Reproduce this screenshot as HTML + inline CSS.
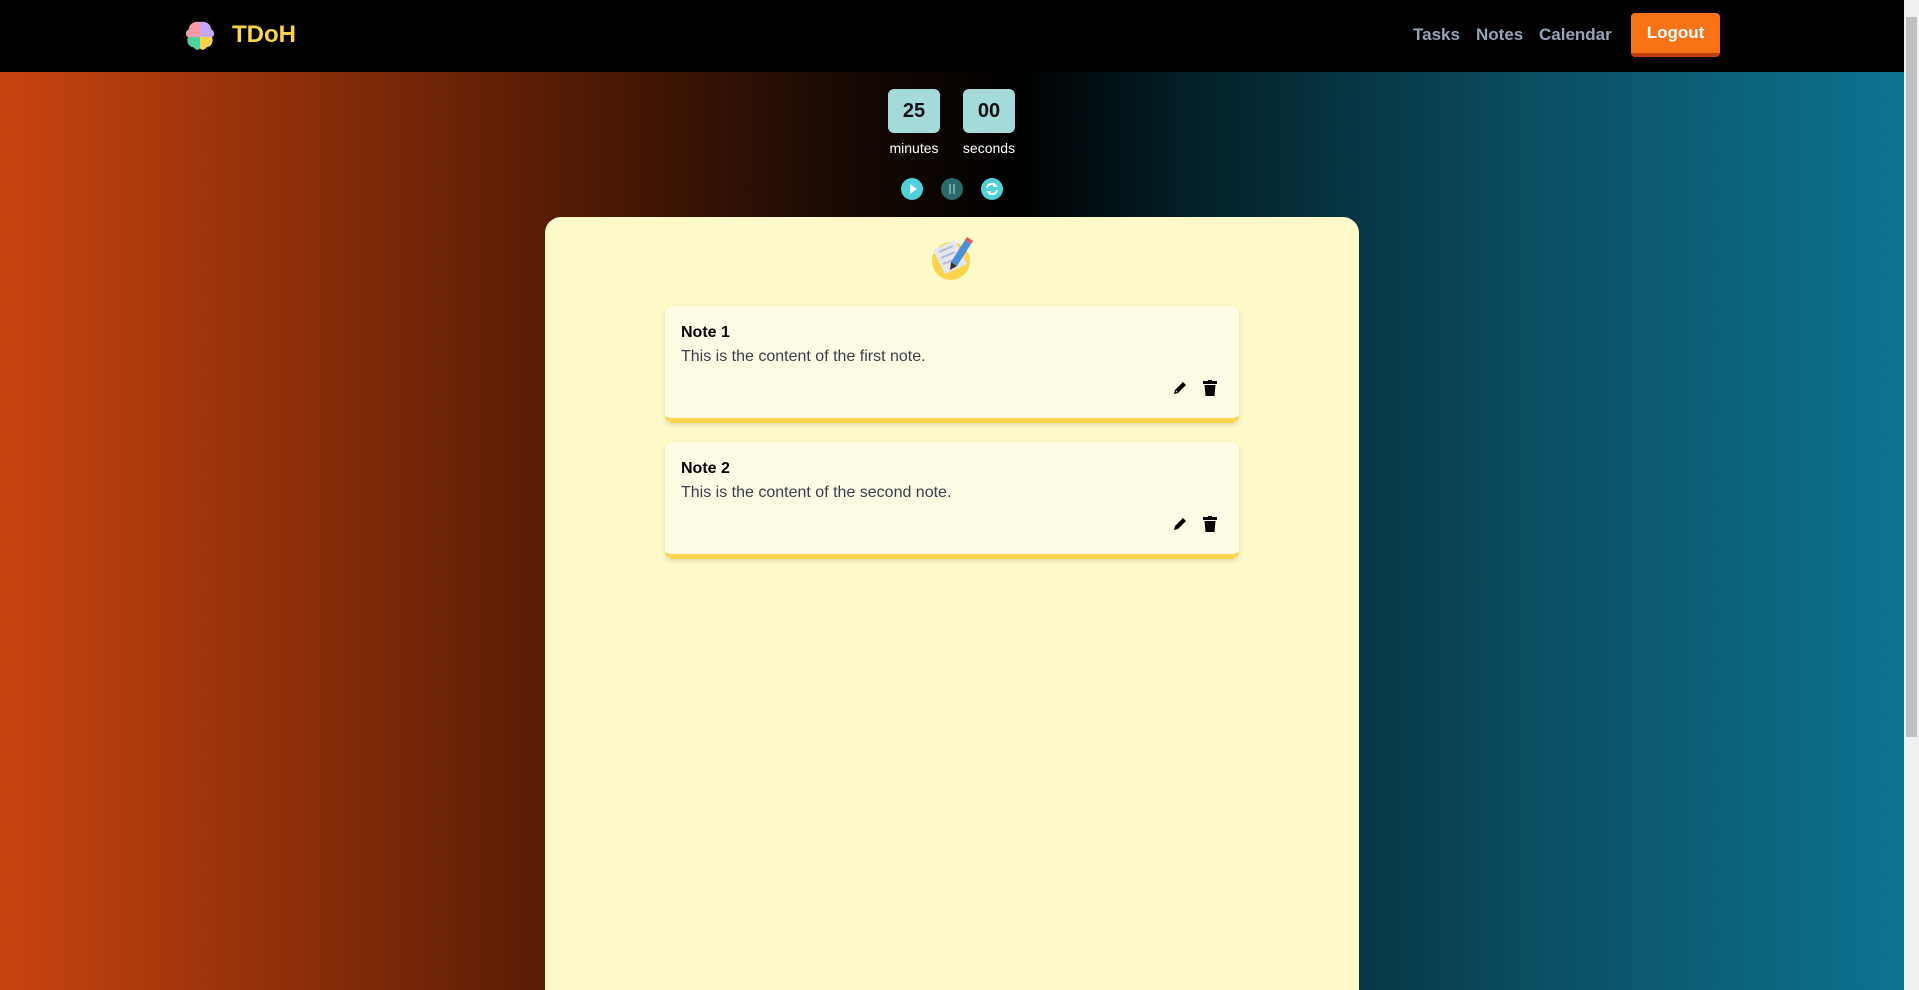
<!DOCTYPE html>
<html><head><meta charset="utf-8"><style>
*{box-sizing:border-box;margin:0;padding:0}
html,body{width:1919px;height:990px;overflow:hidden}
body{font-family:"Liberation Sans",sans-serif;background:linear-gradient(to right,#c9440f 0%,#5a1d05 28%,#140803 45%,#000 53%,#032028 62%,#0b4e62 80%,#0c7592 100%);position:relative}
nav{position:absolute;left:0;top:0;width:1904px;height:72px;background:#000}
.brand{position:absolute;left:232px;top:21px;font-size:24px;font-weight:bold;color:#fcd34d}
.links a{position:absolute;top:25px;font-size:17px;font-weight:bold;color:#94a3b8;text-decoration:none}
.logout{position:absolute;left:1631px;top:13px;width:89px;height:44px;background:#f97316;border-bottom:4px solid #c2410c;border-radius:4px;color:#fff;font-weight:bold;font-size:17px;text-align:center;line-height:40px}
.sb{position:absolute;left:1904px;top:0;width:15px;height:990px;background:#f1f1f1}
.sb i{position:absolute;left:2px;top:17px;width:11px;height:720px;background:#c1c1c1}
.box{position:absolute;top:89px;width:52px;height:44px;background:#a5dadb;border-radius:6px;text-align:center;line-height:44px;font-weight:bold;font-size:20px;color:#111}
.lbl{position:absolute;top:140px;font-size:14px;color:#fff;width:70px;text-align:center}
.btn{position:absolute;top:178px;width:22px;height:22px;border-radius:50%;background:#4fd1d9}
.panel{position:absolute;left:545px;top:217px;width:814px;height:790px;background:#fef9c8;border-radius:16px}
.card{position:absolute;left:665px;width:574px;height:117px;background:#fffce6;border-radius:8px;border-bottom:5px solid #fcd34d;box-shadow:0 2px 5px rgba(0,0,0,.12)}
.card h3{position:absolute;left:16px;top:18px;font-size:16px;color:#000}
.card p{position:absolute;left:16px;top:42px;font-size:16px;color:#3a3f4b}
.card svg{position:absolute;top:74px}
</style></head><body>
<nav>
<svg style="position:absolute;left:184px;top:20px" width="32" height="32" viewBox="0 0 32 32">
<path d="M16 2 C10 1 5 4 5 9 C1 11 1 16 4 17 L16 17Z" fill="#f49aa8"/>
<path d="M16 2 C22 1 27 4 27 9 C31 11 31 16 28 17 L16 17Z" fill="#c4a7f5"/>
<path d="M4 17 C2 22 5 27 9 27 C12 31 16 30 16 28 L16 17Z" fill="#4fd1a0"/>
<path d="M28 17 C30 22 27 27 23 27 C20 31 16 30 16 28 L16 17Z" fill="#fcd34d"/>
</svg>
<div class="brand">TDoH</div>
<div class="links"><a style="left:1413px">Tasks</a><a style="left:1476px">Notes</a><a style="left:1539px">Calendar</a></div>
<div class="logout">Logout</div>
</nav>
<div class="sb"><i></i></div>
<div class="box" style="left:888px">25</div>
<div class="box" style="left:963px">00</div>
<div class="lbl" style="left:879px">minutes</div>
<div class="lbl" style="left:954px">seconds</div>
<div class="btn" style="left:901px"><svg width="22" height="22"><path d="M9 6 L16 11 L9 16Z" fill="#fff"/></svg></div>
<div class="btn" style="left:941px;background:#2a6a6c"><svg width="22" height="22"><rect x="8" y="6" width="2" height="10" fill="#6aa"/><rect x="12" y="6" width="2" height="10" fill="#6aa"/></svg></div>
<div class="btn" style="left:981px"><svg width="22" height="22"><path d="M6 10 A5 5 0 0 1 15 8" stroke="#fff" stroke-width="2" fill="none"/><path d="M16 12 A5 5 0 0 1 7 14" stroke="#fff" stroke-width="2" fill="none"/><path d="M13 5 L17 9 L12 9Z M9 17 L5 13 L10 13Z" fill="#fff"/></svg></div>
<div class="panel"></div>
<svg style="position:absolute;left:927px;top:232px" width="50" height="50" viewBox="0 0 50 50">
<circle cx="24" cy="29" r="19" fill="#fcd34d"/>
<path d="M6 18 L28 8 L40 32 L18 42Z" fill="#e5e7f0"/>
<path d="M12 20 L26 14 M14 26 L28 20 M16 32 L26 28" stroke="#b5b9d0" stroke-width="2"/>
<path d="M38 8 L44 12 L30 34 L24 30Z" fill="#4a90d9"/>
<path d="M38 8 L44 12 L46 9 L40 5Z" fill="#e8506a"/>
<path d="M24 30 L30 34 L23 38Z" fill="#333"/>
</svg>
<div class="card" style="top:306px"><h3>Note 1</h3><p>This is the content of the first note.</p>
<svg style="left:507px" width="16" height="16" viewBox="0 0 16 16"><path d="M2 14 L3 10 L11 2 L14 5 L6 13Z" fill="#000"/><path d="M4 11 L5 12" stroke="#fff"/></svg>
<svg style="left:538px" width="14" height="16" viewBox="0 0 14 16"><rect x="0" y="1" width="14" height="3" fill="#000"/><rect x="5" y="0" width="4" height="2" fill="#000"/><path d="M1.5 5 L12.5 5 L11.5 16 L2.5 16Z" fill="#000"/></svg></div>
<div class="card" style="top:442px"><h3>Note 2</h3><p>This is the content of the second note.</p>
<svg style="left:507px" width="16" height="16" viewBox="0 0 16 16"><path d="M2 14 L3 10 L11 2 L14 5 L6 13Z" fill="#000"/></svg>
<svg style="left:538px" width="14" height="16" viewBox="0 0 14 16"><rect x="0" y="1" width="14" height="3" fill="#000"/><rect x="5" y="0" width="4" height="2" fill="#000"/><path d="M1.5 5 L12.5 5 L11.5 16 L2.5 16Z" fill="#000"/></svg></div>
</body></html>
